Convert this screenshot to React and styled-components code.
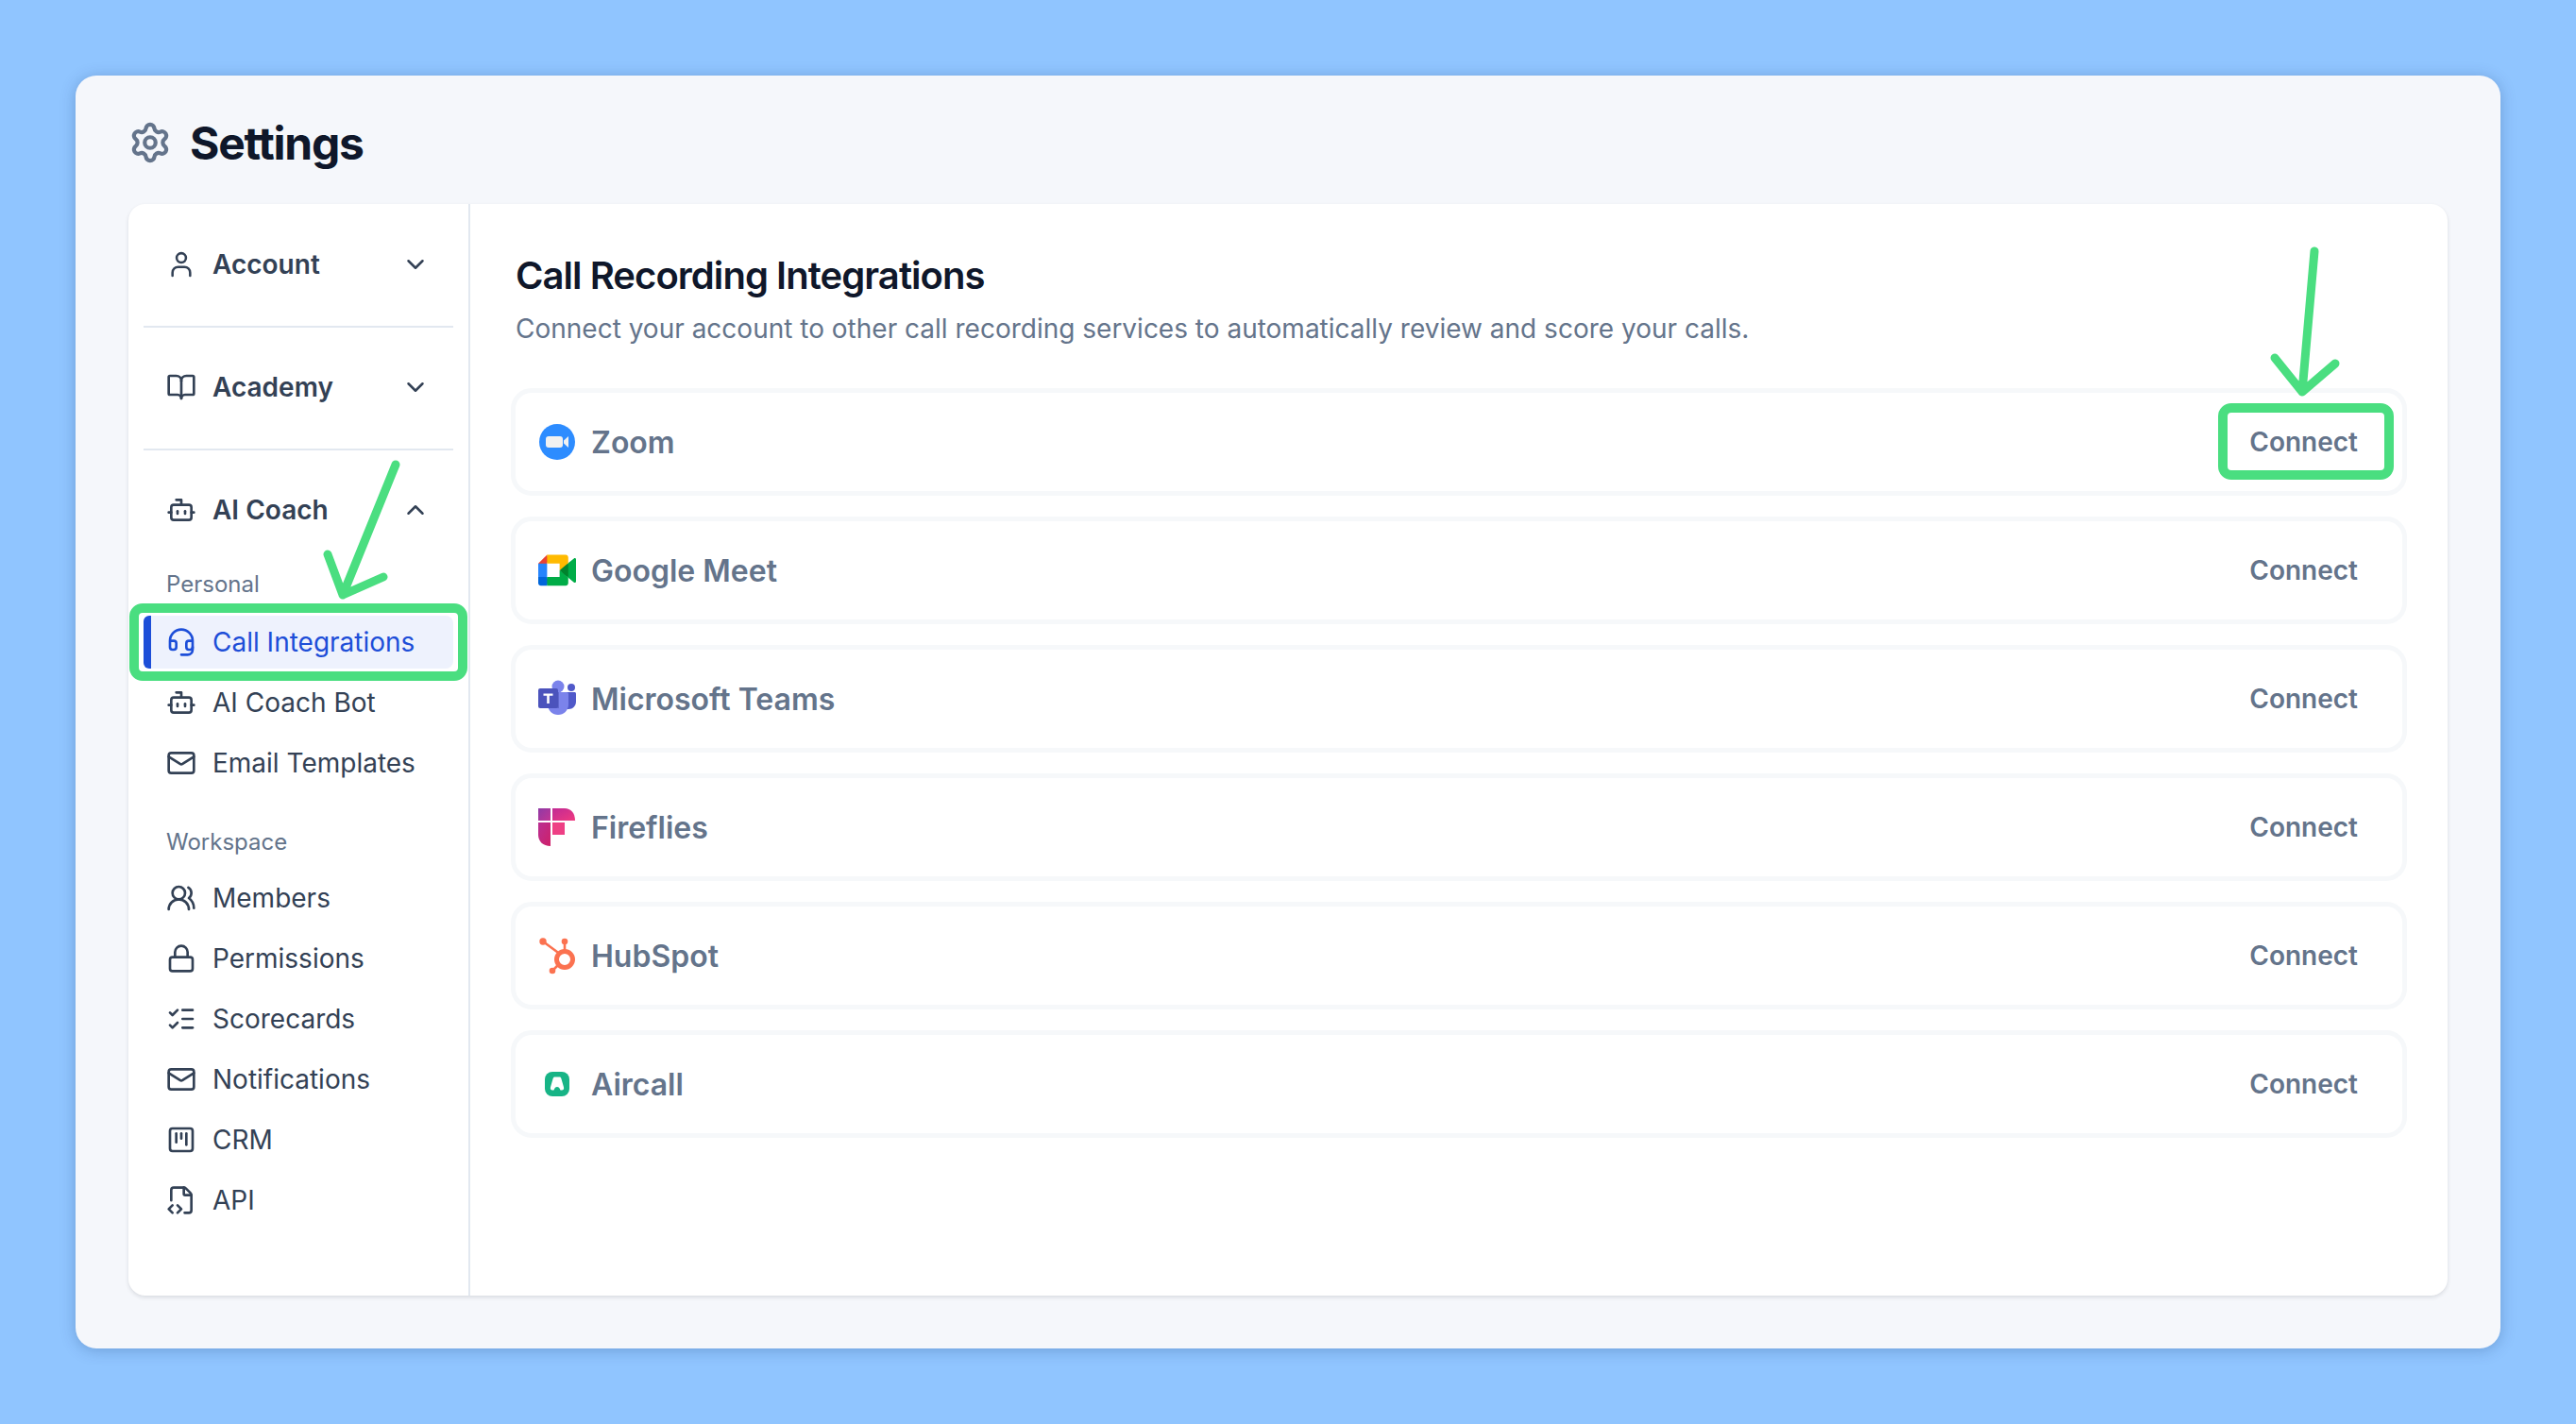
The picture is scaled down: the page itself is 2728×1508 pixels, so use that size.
import React from 'react';
import styled, { createGlobalStyle } from 'styled-components';
import {
  BookOpen,
  Bot,
  ChevronDown,
  ChevronUp,
  FileCode2,
  Headset,
  ListChecks,
  Lock,
  Mail,
  Settings,
  SquareKanban,
  UsersRound,
} from 'lucide-react';

const GlobalStyle = createGlobalStyle`
  html, body {
    margin: 0;
    background: #90c5ff;
    font-family: Inter, "Liberation Sans", sans-serif;
  }
`;

const Page = styled.div`
  width: 2728px;
  height: 1508px;
  padding: 80px;
  box-sizing: border-box;
`;

const Window = styled.div`
  height: 1348px;
  padding: 0 56px 56px;
  box-sizing: border-box;
  display: flex;
  flex-direction: column;
  background: #f5f7fb;
  border-radius: 22px;
  box-shadow: 0 2px 16px rgba(15, 50, 100, 0.26);
`;

const Header = styled.header`
  height: 136px;
  padding-top: 6px;
  box-sizing: border-box;
  display: flex;
  align-items: center;
  gap: 19px;
  color: #64748b;
`;

const Title = styled.h1`
  margin: 0;
  font-size: 48px;
  font-weight: 700;
  color: #0f172a;
  letter-spacing: -1.25px;
`;

const Panel = styled.div`
  flex: 1;
  display: flex;
  background: #fff;
  border-radius: 18px;
  box-shadow: 0 2px 4px rgba(15, 23, 42, 0.12);
`;

const Sidebar = styled.nav`
  width: 362px;
  padding: 0 16px;
  box-sizing: border-box;
  border-right: 2px solid #e2e8f0;
`;

const Section = styled.div`
  padding: ${p => (p.$first ? '32px' : '31px')} 0 33px;
  border-bottom: ${p => (p.$last ? 'none' : '2px solid #e2e8f0')};
`;

const GroupHeader = styled.div`
  height: 64px;
  padding: 0 25px 0 24px;
  display: flex;
  align-items: center;
  gap: 17px;
  color: #334155;
  font-size: 28px;
  font-weight: 600;
  span { flex: 1; }
`;

const Label = styled.div`
  height: 32px;
  margin: ${p => p.$top}px 0 ${p => p.$bottom}px;
  padding-left: 24px;
  font-size: 24px;
  line-height: 32px;
  color: #64748b;
`;

const NavList = styled.div`
  display: flex;
  flex-direction: column;
  gap: 8px;
`;

const NavItem = styled.div`
  position: relative;
  height: 56px;
  padding-left: 24px;
  display: flex;
  align-items: center;
  gap: 17px;
  font-size: 28px;
  font-weight: 400;
  border-radius: 8px;
  color: ${p => (p.$active ? '#1d4ed8' : '#334155')};
  background: ${p => (p.$active ? '#eef2fd' : 'transparent')};
  &::before {
    content: '';
    display: ${p => (p.$active ? 'block' : 'none')};
    position: absolute;
    left: 0;
    top: 0;
    bottom: 0;
    width: 8px;
    border-radius: 6px 0 0 6px;
    background: #1d4ed8;
  }
`;

const Highlight = styled.span`
  position: absolute;
  box-sizing: border-box;
  border: 10px solid #4ade80;
  border-radius: 14px;
  pointer-events: none;
  top: ${p => p.$top}px;
  right: ${p => p.$right}px;
  bottom: ${p => p.$bottom}px;
  left: ${p => p.$left}px;
`;

const Arrow = styled.svg`
  position: absolute;
  left: ${p => p.$left}px;
  top: ${p => p.$top}px;
  fill: none;
  stroke: #4ade80;
  stroke-width: 9;
  stroke-linecap: round;
  stroke-linejoin: round;
`;

const Content = styled.main`
  flex: 1;
  padding: 52px 43px 0;
`;

const Heading = styled.h2`
  margin: 0 0 0 5px;
  font-size: 40px;
  line-height: 48px;
  font-weight: 600;
  color: #0f172a;
  letter-spacing: -0.95px;
`;

const Subtitle = styled.p`
  margin: 15px 0 46px 5px;
  font-size: 28px;
  line-height: 34px;
  color: #64748b;
`;

const Rows = styled.div`
  display: flex;
  flex-direction: column;
  gap: 22px;
`;

const Row = styled.div`
  height: 114px;
  padding: 0 13px 0 24px;
  box-sizing: border-box;
  display: flex;
  align-items: center;
  gap: 16px;
  border: 5px solid #f6f8fa;
  border-radius: 22px;
`;

const RowName = styled.span`
  flex: 1;
  font-size: 32px;
  font-weight: 600;
  color: #64748b;
`;

const ConnectButton = styled.button`
  position: relative;
  height: 64px;
  padding: 0 34px;
  border: none;
  background: none;
  font-family: inherit;
  font-size: 28px;
  font-weight: 600;
  color: #64748b;
`;

const Logo = styled.svg`
  width: 40px;
  height: 40px;
  flex: none;
`;

// lucide's round user has a larger head and body than the one in the sidebar
const AccountIcon = () => (
  <svg width="32" height="32" viewBox="0 0 24 24" fill="none" stroke="currentColor" strokeWidth="1.900" strokeLinecap="round" strokeLinejoin="round">
    <circle cx="12" cy="6.800" r="3.700" />
    <path d="M5 21v-2.500A4.500 4.500 0 0 1 9.500 14h5a4.500 4.500 0 0 1 4.500 4.500V21" />
  </svg>
);

const ZoomLogo = () => (
  <Logo viewBox="0 0 40 40">
    <circle cx="20" cy="20" r="19" fill="#2d8cff" />
    <rect x="8" y="14" width="18" height="12" rx="3" fill="#f1f1f1" />
    <path d="M27 18.500l5-4.500v12l-5-4.500z" fill="#f1f1f1" />
  </Logo>
);

const MeetLogo = () => (
  <Logo viewBox="0 0 87.500 87.500">
    <g transform="translate(0 7.500)">
      <path fill="#00832d" d="M49.500 36l8.530 9.750 11.470 7.330 2-17.020-2-16.640-11.690 6.440z" />
      <path fill="#0066da" d="M0 51.500V66c0 3.315 2.685 6 6 6h14.500l3-10.960-3-9.540-9.950-3z" />
      <path fill="#e94235" d="M20.500 0L0 20.500l10.550 3 9.950-3 2.950-9.410z" />
      <path fill="#2684fc" d="M20.500 20.500H0v31h20.500z" />
      <path fill="#00ac47" d="M82.600 8.680L69.500 19.420v33.660l13.160 10.790c1.970 1.540 4.850.135 4.850-2.370V11c0-2.535-2.945-3.925-4.910-2.320zM49.500 36v15.500h-29V72h43c3.315 0 6-2.685 6-6V53.080z" />
      <path fill="#ffba00" d="M63.500 0h-43v20.500h29V36l20-16.570V6c0-3.315-2.685-6-6-6z" />
    </g>
  </Logo>
);

const TeamsLogo = () => (
  <Logo viewBox="0 0 40 40">
    <circle cx="35" cy="8" r="4" fill="#5059c9" />
    <path d="M28 13h10.500c.8 0 1.500.7 1.500 1.500V23c0 4.500-3.500 8-8 8h-4z" fill="#5059c9" />
    <circle cx="21" cy="7" r="6.500" fill="#7b83eb" />
    <path d="M10 13h20c1.200 0 2 .8 2 2v11c0 6.500-5 11-11 11s-11-4.500-11-11z" fill="#7b83eb" />
    <path d="M10 13h12v17H10z" fill="#3f46a8" opacity=".45" />
    <rect x="0" y="9" width="21" height="21" rx="2" fill="#4b53bc" />
    <path d="M15.500 14.500h-10v2.300h3.700V25h2.600v-8.200h3.700z" fill="#fff" />
  </Logo>
);

const FirefliesLogo = () => (
  <Logo viewBox="0 0 40 40">
    <defs>
      <linearGradient id="ffA" x1="0" y1="0" x2="1" y2="1">
        <stop offset="0" stopColor="#8f3aa6" />
        <stop offset="1" stopColor="#c23594" />
      </linearGradient>
      <linearGradient id="ffB" x1="0" y1="0" x2="1" y2="1">
        <stop offset="0" stopColor="#c02a95" />
        <stop offset="1" stopColor="#f0397f" />
      </linearGradient>
      <linearGradient id="ffC" x1="0" y1="0" x2="1" y2="1">
        <stop offset="0" stopColor="#b92f93" />
        <stop offset="1" stopColor="#cf2068" />
      </linearGradient>
    </defs>
    <path d="M0 0h13v13H0z" fill="url(#ffA)" />
    <path d="M15 0h13c6.500 0 11 5 11 13H15z" fill="url(#ffB)" />
    <path d="M0 15h13v25C5 40 0 35 0 28z" fill="url(#ffC)" />
    <path d="M15 15h13v13H15z" fill="#ee3f85" />
  </Logo>
);

const HubSpotLogo = () => (
  <Logo viewBox="0 0 40 40">
    <g stroke="#fb7250" fill="none" strokeWidth="2.600">
      <path d="M5 5l17 12.500M28 5v10M15 36l6.500-6.500" />
      <circle cx="28" cy="24" r="8.500" strokeWidth="5" />
    </g>
    <g fill="#fb7250">
      <circle cx="5" cy="5" r="3.700" />
      <circle cx="28" cy="5" r="3.300" />
      <circle cx="15" cy="36" r="3.300" />
    </g>
  </Logo>
);

const AircallLogo = () => (
  <Logo viewBox="0 0 40 40">
    <rect x="7" y="7" width="26" height="26" rx="8" fill="#17b486" />
    <path d="M17.500 12.500h5c1 0 1.500.6 1.900 1.800l2.600 9c.6 2.200-.6 3.200-2 3.200h-1.500c-.8-2.500-2-3.500-3.500-3.500s-2.700 1-3.500 3.500H15c-1.400 0-2.600-1-2-3.200l2.600-9c.4-1.200.9-1.800 1.900-1.800z" fill="#fff" />
  </Logo>
);

const integrations = [
  { name: 'Zoom', logo: <ZoomLogo /> },
  { name: 'Google Meet', logo: <MeetLogo /> },
  { name: 'Microsoft Teams', logo: <TeamsLogo /> },
  { name: 'Fireflies', logo: <FirefliesLogo /> },
  { name: 'HubSpot', logo: <HubSpotLogo /> },
  { name: 'Aircall', logo: <AircallLogo /> },
];

const workspace = [
  { name: 'Members', icon: UsersRound },
  { name: 'Permissions', icon: Lock },
  { name: 'Scorecards', icon: ListChecks },
  { name: 'Notifications', icon: Mail },
  { name: 'CRM', icon: SquareKanban },
  { name: 'API', icon: FileCode2 },
];

const App = () => {
  return (
    <Page>
      <GlobalStyle />
      <Window>
        <Header>
          <Settings size={46} strokeWidth={2.2} />
          <Title>Settings</Title>
        </Header>
        <Panel>
          <Sidebar>
            <Section $first>
              <GroupHeader>
                <AccountIcon />
                <span>Account</span>
                <ChevronDown size={30} />
              </GroupHeader>
            </Section>
            <Section>
              <GroupHeader>
                <BookOpen size={32} />
                <span>Academy</span>
                <ChevronDown size={30} />
              </GroupHeader>
            </Section>
            <Section $last>
              <GroupHeader>
                <Bot size={32} />
                <span>AI Coach</span>
                <ChevronUp size={30} />
              </GroupHeader>
              <Label $top={31} $bottom={17}>Personal</Label>
              <NavList>
                <NavItem $active>
                  <Headset size={32} />
                  Call Integrations
                  <Highlight $top={-13} $right={-15} $bottom={-13} $left={-15} />
                  <Arrow $left={186} $top={-170} width="90" height="155" viewBox="0 0 90 155">
                    <path d="M81 10L25 148M9 105l16 43 43-19" />
                  </Arrow>
                </NavItem>
                <NavItem>
                  <Bot size={32} />
                  AI Coach Bot
                </NavItem>
                <NavItem>
                  <Mail size={32} />
                  Email Templates
                </NavItem>
              </NavList>
              <Label $top={40} $bottom={15}>Workspace</Label>
              <NavList>
                {workspace.map(({ name, icon: Icon }) => (
                  <NavItem key={name}>
                    <Icon size={32} />
                    {name}
                  </NavItem>
                ))}
              </NavList>
            </Section>
          </Sidebar>
          <Content>
            <Heading>Call Recording Integrations</Heading>
            <Subtitle>Connect your account to other call recording services to automatically review and score your calls.</Subtitle>
            <Rows>
              {integrations.map(({ name, logo }, i) => (
                <Row key={name}>
                  {logo}
                  <RowName>{name}</RowName>
                  <ConnectButton>
                    Connect
                    {i === 0 && (
                      <>
                        <Highlight $top={-9} $right={-4} $bottom={-8} $left={1} />
                        <Arrow $left={51} $top={-178} width="85" height="167" viewBox="0 0 85 167">
                          <path d="M52 8L39 157M10 121l29 36 35-30" />
                        </Arrow>
                      </>
                    )}
                  </ConnectButton>
                </Row>
              ))}
            </Rows>
          </Content>
        </Panel>
      </Window>
    </Page>
  );
};

export default App;
